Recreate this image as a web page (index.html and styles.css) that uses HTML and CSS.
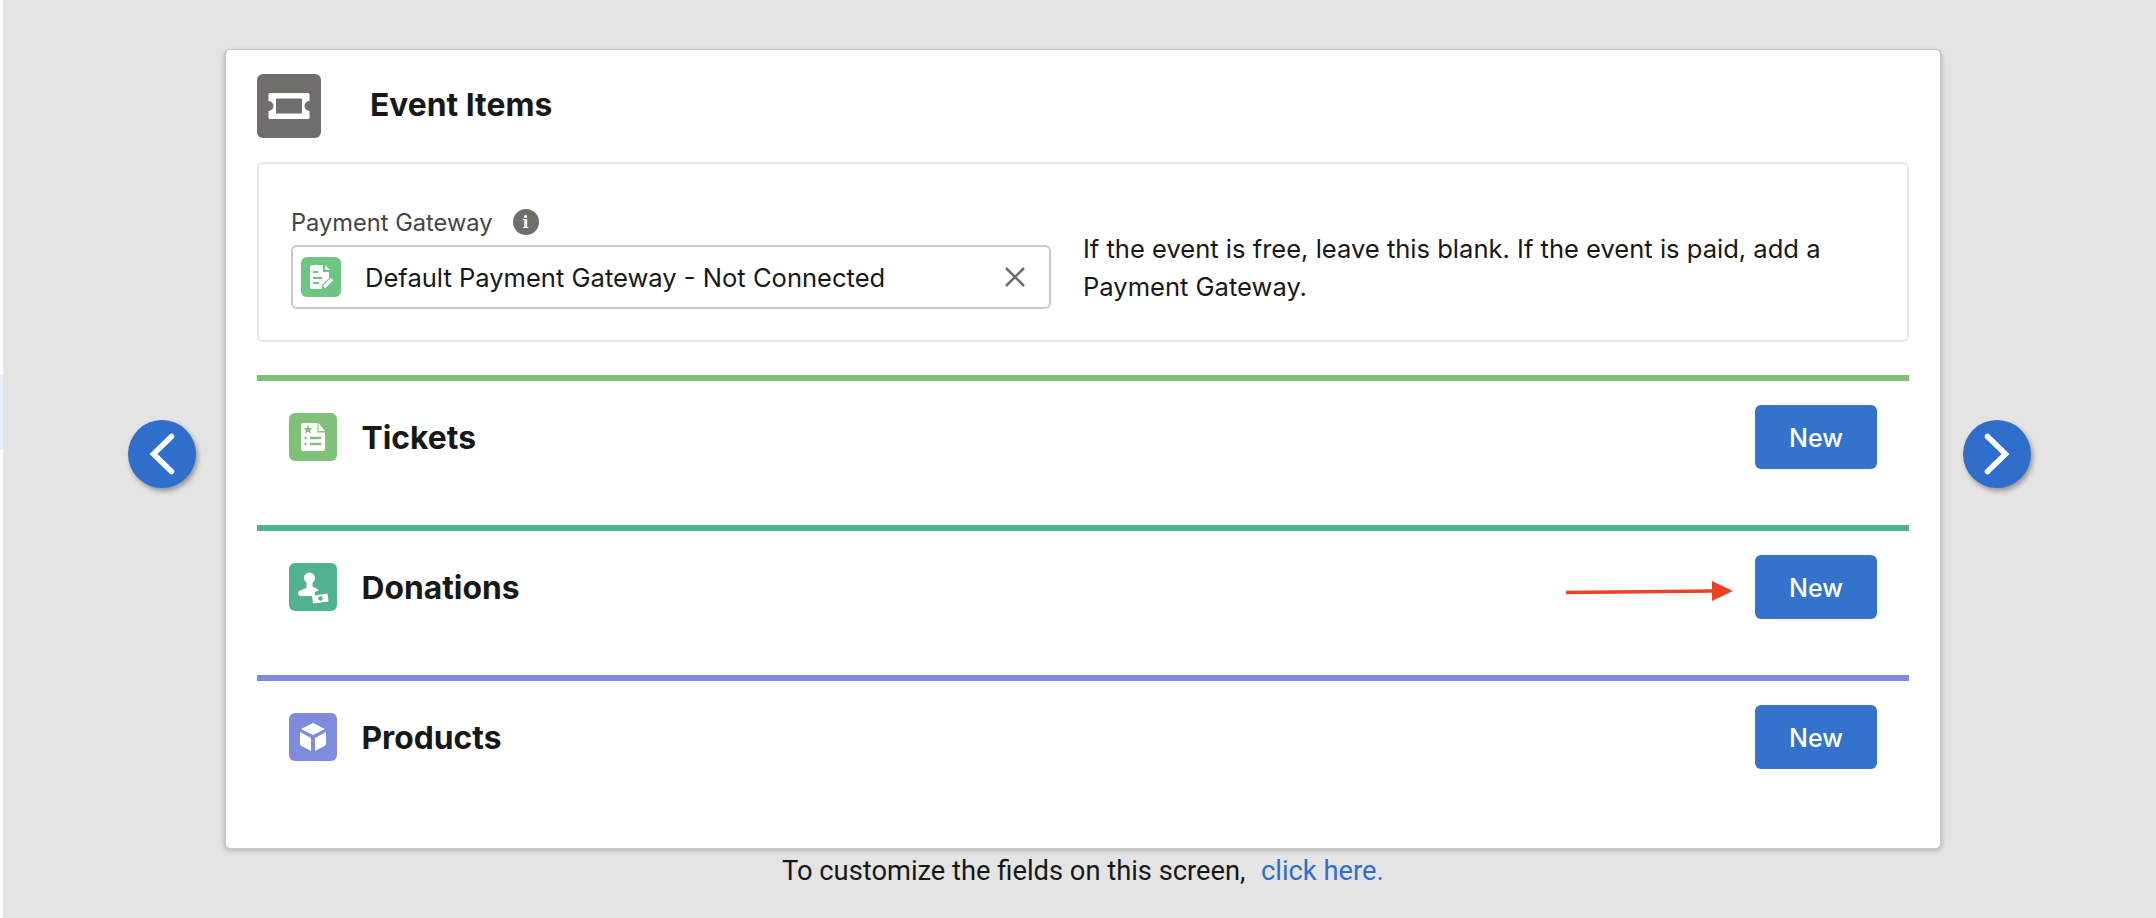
FILE: index.html
```html
<!DOCTYPE html>
<html lang="en">
<head>
<meta charset="utf-8">
<title>Event Items</title>
<link rel="stylesheet" href="styles.css">
</head>
<body>
<div class="page">
  <div class="edge"><div class="edge-mark"></div></div>
  <div class="stage">
    <div class="row">
      <button class="nav nav-prev" aria-label="Previous"><svg viewBox="0 0 68 68" width="68" height="68"><path d="M43.500 16.500 L25.500 34 L43.500 51.500" class="chev"/></svg></button>
      <main class="card">
        <header class="card-head">
          <span class="head-icon"><svg viewBox="0 0 64 64" width="64" height="64"><path d="M13 19h38a1.500 1.500 0 0 1 1.500 1.500v6.500a5 5 0 0 0 0 10v6.500a1.500 1.500 0 0 1-1.500 1.500h-38a1.500 1.500 0 0 1-1.500-1.500v-6.500a5 5 0 0 0 0-10v-6.500a1.500 1.500 0 0 1 1.500-1.500z" fill="#fff"/><rect x="19" y="24.500" width="26" height="15" fill="#706e6b"/></svg></span>
          <h1 class="card-title">Event Items</h1>
        </header>
        <section class="gateway">
          <div class="field">
            <div class="field-label"><span>Payment Gateway</span><span class="info">i</span></div>
            <div class="lookup">
              <span class="lookup-icon"><svg viewBox="0 0 40 40" width="40" height="40"><path d="M11 8h11v7h6v6l-7 7v4H11a2 2 0 0 1-2-2V10a2 2 0 0 1 2-2z" fill="#fff"/><path d="M24 8l5 5h-5z" fill="#fff"/><path d="M12 15h5M12 21h9M12 26h6" stroke="#6cc581" stroke-width="2"/><path d="M23 30l8-8" stroke="#fff" stroke-width="3.500"/></svg></span>
              <span class="lookup-text">Default Payment Gateway - Not Connected</span>
              <svg class="clear" viewBox="0 0 20 20" width="20" height="20"><path d="M1 1l18 18M19 1L1 19" stroke="#706e6b" stroke-width="2.600"/></svg>
            </div>
          </div>
          <p class="gateway-help">If the event is free, leave this blank. If the event is paid, add a Payment Gateway.</p>
        </section>
        <section class="item item-tickets">
          <span class="item-icon"><svg viewBox="0 0 48 48" width="48" height="48"><path d="M14 10h14.500v9.500H36V36a2 2 0 0 1-2 2H14a2 2 0 0 1-2-2V12a2 2 0 0 1 2-2z" fill="#fff"/><path d="M29.500 10l6.500 8h-6.500z" fill="#fff"/><path d="M19 12l1.300 2.900 3.200.3-2.400 2.100.7 3.100-2.800-1.600-2.800 1.600.7-3.100-2.400-2.100 3.200-.3z" fill="#80c07b"/><path d="M15.500 25h2M21 25h11M15.500 31h2M21 31h11" stroke="#80c07b" stroke-width="2.400"/></svg></span>
          <h2 class="item-title">Tickets</h2>
          <button class="btn">New</button>
        </section>
        <section class="item item-donations">
          <span class="item-icon"><svg viewBox="0 0 48 48" width="48" height="48"><circle cx="20.500" cy="15" r="5.500" fill="#fff"/><path d="M17.500 19h6v4.500l6.500 3.500-4 2v4H12a3 3 0 0 1-3-2.500c0-2.500 2.500-3.500 8.500-5.500z" fill="#fff"/><path d="M23 33l15.500-2.500 1 8-15.500 2z" fill="#fff"/><circle cx="31.500" cy="35.500" r="2.200" fill="#53b28e"/></svg></span>
          <h2 class="item-title">Donations</h2>
          <svg class="arrow" viewBox="0 0 170 24" width="170" height="24"><path d="M1 13.500L148 12" stroke="#ec4125" stroke-width="3.500"/><path d="M147 2l21 10-21 10z" fill="#ec4125"/></svg>
          <button class="btn">New</button>
        </section>
        <section class="item item-products">
          <span class="item-icon"><svg viewBox="0 0 48 48" width="48" height="48"><path d="M24 10l12 6-12 6-12-6z" fill="#fff"/><path d="M11 19l11 6v13l-9.500-5a3 3 0 0 1-1.500-2.500z" fill="#fff"/><path d="M37 19l-11 6v13l9.500-5a3 3 0 0 0 1.500-2.500z" fill="#fff"/></svg></span>
          <h2 class="item-title">Products</h2>
          <button class="btn">New</button>
        </section>
      </main>
      <button class="nav nav-next" aria-label="Next"><svg viewBox="0 0 68 68" width="68" height="68"><path d="M24.500 16.500 L42.500 34 L24.500 51.500" class="chev"/></svg></button>
    </div>
    <p class="note">To customize the fields on this screen,&nbsp; <a class="note-link" href="#">click here.</a></p>
  </div>
</div>
</body>
</html>
```

FILE: styles.css
```css
* { box-sizing: border-box; }
html, body { margin: 0; height: 100%; }
body { background: #e4e4e4; font-family: Inter, "Liberation Sans", sans-serif; color: #181818; overflow: hidden; }

.page { display: flex; height: 918px; }
.edge { width: 3px; background: #fdfdfd; padding-top: 375px; flex: none; }
.edge-mark { height: 75px; background: #e9effa; }

.stage { flex: 1; padding-top: 49px; }
.row { display: flex; align-items: flex-start; padding-left: 125px; }

.nav { width: 68px; height: 68px; flex: none; margin-top: 371px; padding: 0; border: 0; border-radius: 50%; background: #2f6ecb; box-shadow: 2px 3px 5px rgba(0, 0, 0, .35); }
.nav svg { display: block; }
.chev { fill: none; stroke: #fff; stroke-width: 5.500; stroke-linecap: round; stroke-linejoin: miter; }
.nav-prev { margin-right: 28px; }
.nav-next { margin-left: 21px; }

.card { width: 1718px; height: 800px; flex: none; padding: 24px 31px 0; background: #fff; border: 1px solid #c9c9c9; border-width: 1px 2px 1px 2px; border-radius: 6px; box-shadow: 0 2px 5px rgba(0, 0, 0, .2); }

.card-head { display: flex; align-items: center; height: 64px; }
.head-icon { width: 64px; height: 64px; border-radius: 6px; background: #706e6b; }
.head-icon svg, .item-icon svg, .lookup-icon svg { display: block; }
.card-title { margin: -3px 0 0 49px; font-size: 31.800px; line-height: 36px; font-weight: 700; }

.gateway { display: flex; align-items: flex-start; height: 180px; margin-top: 24px; padding: 44px 28px 0 32px; border: 2px solid #e6e6e6; border-radius: 6px; }
.field { width: 760px; flex: none; }
.field-label { display: flex; align-items: center; height: 28px; font-size: 23.650px; color: #444; }
.info { display: flex; align-items: center; justify-content: center; width: 26px; height: 26px; margin-left: 20px; border-radius: 50%; background: #706e6b; color: #fff; font-size: 16px; font-weight: 800; font-family: "DejaVu Serif", serif; }
.lookup { display: flex; align-items: center; width: 760px; height: 64px; margin-top: 9px; padding: 0 24px 0 8px; border: 2px solid #c9c9c9; border-radius: 6px; }
.lookup-icon { width: 40px; height: 40px; border-radius: 6px; background: #6cc581; flex: none; }
.lookup-text { flex: 1; margin-left: 24px; font-size: 25.550px; white-space: nowrap; }
.clear { flex: none; }
.gateway-help { margin: 22px 0 0 32px; font-size: 25.550px; line-height: 38px; }

.item { position: relative; display: flex; align-items: flex-start; height: 150px; padding: 24px 32px 0 32px; border-top: 6px solid; }
.item-tickets { margin-top: 33px; border-color: #80c07b; }
.item-donations { border-color: #53b28e; }
.item-products { border-color: #7f8bdc; }
.item-icon { width: 48px; height: 48px; flex: none; margin-top: 8px; border-radius: 6px; }
.item-tickets .item-icon { background: #80c07b; }
.item-donations .item-icon { background: #53b28e; }
.item-products .item-icon { background: #7f8bdc; }
.item-title { flex: 1; margin: 15px 0 0 24.500px; font-size: 31.800px; line-height: 36px; font-weight: 700; }
.btn { width: 122px; height: 64px; padding: 1px 0 0; border: 0; border-radius: 6px; background: #3373cc; color: #fff; font: 500 25px Inter, "Liberation Sans", sans-serif; }
.arrow { position: absolute; left: 1308px; top: 48px; }

.note { margin: 7px 0 0 779px; font: 27.300px/30px Roboto, "Liberation Sans", sans-serif; white-space: nowrap; }
.note-link { margin-left: 2px; color: #2f6ecb; text-decoration: none; }
```
